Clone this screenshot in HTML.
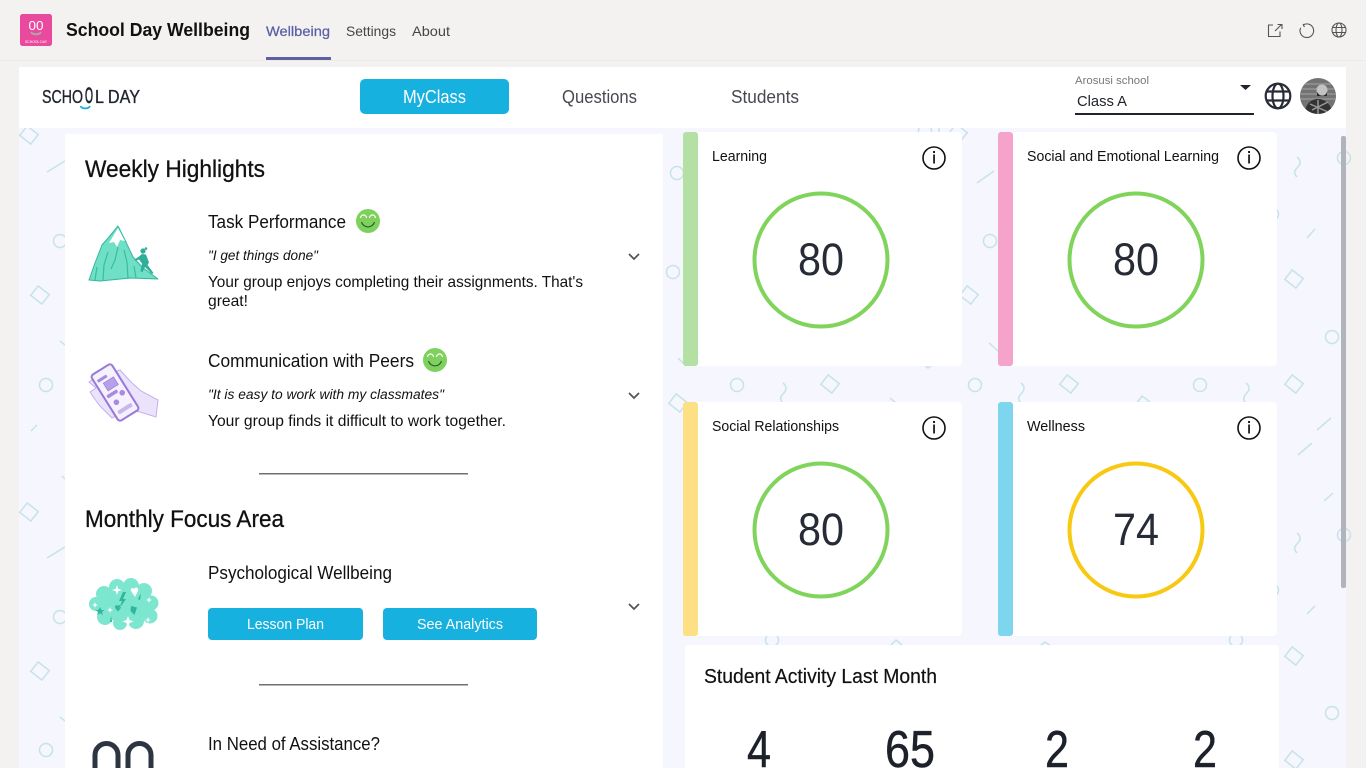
<!DOCTYPE html>
<html><head><meta charset="utf-8"><title>School Day Wellbeing</title>
<style>
html,body{margin:0;padding:0;width:1366px;height:768px;overflow:hidden;background:#f3f2f1}
svg{display:block;position:absolute;left:0;top:0}
text{font-family:"Liberation Sans",sans-serif}
.p{fill:none;stroke:#c8e2ea;stroke-width:1.500}
</style></head><body>
<svg width="1366" height="768" viewBox="0 0 1366 768" xmlns="http://www.w3.org/2000/svg">
<defs>
<g id="dia"><rect x="-7" y="-6" width="14" height="12" transform="rotate(38)" class="p"/></g>
<g id="cir"><circle r="6.500" class="p"/></g>
<g id="s"><path class="p" d="M-1 -10c5 4 3 8 0 11c-3 3 -3 6 0 9"/></g>
<g id="info"><circle r="11" fill="#fff" stroke="#111" stroke-width="1.600"/><rect x="-.8" y="-3.500" width="1.700" height="9" fill="#111"/><rect x="-.9" y="-7" width="1.900" height="2" fill="#111"/></g>
<g id="smile"><circle r="12" fill="#7fd15d"/><path d="M-7.500 -3a3 3 0 0 1 6 0M1.500 -3a3 3 0 0 1 6 0" fill="none" stroke="#fff" stroke-width="1.200"/><path d="M-6.500 1a6.800 7 0 0 0 13 0" fill="none" stroke="#2b5a38" stroke-width="1.200"/></g>
<g id="chev"><path d="M-5 -3L0 2L5 -3" fill="none" stroke="#555" stroke-width="1.800"/></g>
</defs>

<rect width="1366" height="768" fill="#f3f2f1"/>
<rect x="0" y="60" width="1366" height="1" fill="#ecebea"/>
<rect x="19" y="128" width="1327" height="640" fill="#f5f6fe"/>

<!-- background pattern -->
<use href="#dia" x="29" y="135"/><path class="p" d="M47 172L65 161"/><use href="#cir" x="60" y="241"/>
<use href="#dia" x="40" y="295"/><path class="p" d="M60 341L65 345"/><use href="#cir" x="46" y="385"/>
<path class="p" d="M31 431L37 425"/><path class="p" d="M62 476L65 479"/><use href="#dia" x="29" y="512"/>
<path class="p" d="M47 558L65 547"/><use href="#cir" x="60" y="617"/><use href="#dia" x="40" y="671"/>
<path class="p" d="M60 717L65 721"/><use href="#cir" x="46" y="750"/>
<use href="#cir" x="673" y="272"/><use href="#cir" x="677" y="173"/><path class="p" d="M678 358L686 366"/>
<use href="#dia" x="969" y="295"/><path class="p" d="M977 183L994 171"/><use href="#cir" x="990" y="241"/><path class="p" d="M989 343L998 351"/>
<use href="#cir" x="737" y="385"/><use href="#s" x="784" y="393"/><use href="#dia" x="830" y="384"/><use href="#dia" x="678" y="403"/>
<path class="p" d="M890 398L896 403M921 362L928 368L936 362"/>
<use href="#cir" x="975" y="385"/><use href="#s" x="1022" y="393"/><use href="#dia" x="1069" y="384"/><path class="p" d="M1136 404L1142 396L1150 402"/>
<use href="#cir" x="1200" y="385"/><use href="#s" x="1247" y="393"/><use href="#dia" x="1294" y="384"/>
<use href="#s" x="1298" y="167"/><path class="p" d="M1307 238L1315 229"/>
<use href="#dia" x="1294" y="279"/><use href="#cir" x="1332" y="337"/>
<path class="p" d="M1317 430L1331 418"/><path class="p" d="M1298 455L1312 443"/><path class="p" d="M1324 501L1333 493"/>
<use href="#s" x="1298" y="543"/><path class="p" d="M1307 614L1315 606"/>
<use href="#dia" x="1294" y="656"/><use href="#cir" x="1332" y="713"/><use href="#dia" x="1294" y="760"/>
<use href="#cir" x="1344" y="158"/><use href="#cir" x="1344" y="535"/><use href="#cir" x="1272" y="214"/><use href="#cir" x="1272" y="590"/>
<use href="#cir" x="925" y="131"/><use href="#dia" x="958" y="133"/><path class="p" d="M939 128v5"/>
<use href="#cir" x="772" y="640"/><use href="#cir" x="1236" y="640"/>
<path class="p" d="M891 645L896 640L902 645M1040 646L1045 642L1051 646"/>

<rect x="1341" y="136" width="5" height="452" rx="2" fill="#b2b4bd"/>

<!-- top bar -->
<rect x="20" y="14" width="32" height="32" rx="2.500" fill="#ea4a9d"/>
<text x="36" y="30" font-size="13" fill="#fff" text-anchor="middle" textLength="15" lengthAdjust="spacingAndGlyphs">00</text>
<path d="M31 32a5.500 4 0 0 0 10 0" fill="none" stroke="#aaa" stroke-width="1.800"/>
<text x="36" y="43" font-size="3.500" fill="#fff" text-anchor="middle" textLength="22" lengthAdjust="spacingAndGlyphs">SCHOOL DAY</text>
<text x="66" y="36" font-size="18" font-weight="700" fill="#111" textLength="184" lengthAdjust="spacingAndGlyphs">School Day Wellbeing</text>
<text x="266" y="36" font-size="14" fill="#5b5ea6" stroke="#5b5ea6" stroke-width=".25" textLength="64" lengthAdjust="spacingAndGlyphs">Wellbeing</text>
<rect x="266" y="57" width="65" height="3" fill="#5f60a4"/>
<text x="346" y="36" font-size="14" fill="#484644" textLength="50" lengthAdjust="spacingAndGlyphs">Settings</text>
<text x="412" y="36" font-size="14" fill="#484644" textLength="38" lengthAdjust="spacingAndGlyphs">About</text>
<g fill="none" stroke="#555" stroke-width="1.100">
<path d="M1273 25h-4.500v11.500h11.500v-5M1275 31l6.500 -6.500M1277.500 24.500h4.500v4.500"/>
<path d="M1303.500 24.800a6.800 6.800 0 1 1 -2.800 3M1303 24.500l1.500 2.500M1303 24.500l3 -.5"/>
<circle cx="1339" cy="30" r="7"/><ellipse cx="1339" cy="30" rx="3" ry="7"/><path d="M1332.500 27.500h13M1332.500 32.500h13"/>
</g>

<!-- app header -->
<rect x="19" y="67" width="1327" height="61" fill="#fff"/>
<text x="42" y="103" font-size="18" fill="#20242c" stroke="#20242c" stroke-width=".3" textLength="41" lengthAdjust="spacingAndGlyphs">SCHO</text>
<text x="85" y="103" font-size="22" fill="#20242c" stroke="#20242c" stroke-width=".8" textLength="8" lengthAdjust="spacingAndGlyphs">O</text>
<text x="95" y="103" font-size="18" fill="#20242c" stroke="#20242c" stroke-width=".3" textLength="45" lengthAdjust="spacingAndGlyphs">L DAY</text>
<path d="M80.500 106a5 3.500 0 0 0 9.500 0" fill="none" stroke="#17b1e0" stroke-width="1.800"/>
<rect x="360" y="79" width="149" height="35" rx="5" fill="#17b1e0"/>
<text x="403" y="103" font-size="18" fill="#fff" textLength="63" lengthAdjust="spacingAndGlyphs">MyClass</text>
<text x="562" y="103" font-size="18" fill="#464a50" textLength="75" lengthAdjust="spacingAndGlyphs">Questions</text>
<text x="731" y="103" font-size="18" fill="#464a50" textLength="68" lengthAdjust="spacingAndGlyphs">Students</text>
<text x="1075" y="84" font-size="11" fill="#777" textLength="74" lengthAdjust="spacingAndGlyphs">Arosusi school</text>
<text x="1077" y="106" font-size="15" fill="#20242c" textLength="50" lengthAdjust="spacingAndGlyphs">Class A</text>
<rect x="1075" y="113" width="179" height="2" fill="#20242c"/>
<path d="M1240 85h11l-5.500 5z" fill="#20242c"/>
<g fill="none" stroke="#262b36" stroke-width="2.200">
<circle cx="1278" cy="96" r="12.300"/><ellipse cx="1278" cy="96" rx="5.500" ry="12.300"/><path d="M1267 91.500h22M1267 100.500h22"/>
</g>
<clipPath id="av"><circle cx="1318" cy="96" r="18"/></clipPath>
<g clip-path="url(#av)">
<rect x="1300" y="78" width="36" height="36" fill="#737373"/>
<path d="M1300 84h36M1300 89h36M1300 94h36M1300 99h36" stroke="#959595" stroke-width="1.500"/>
<circle cx="1322" cy="90" r="5.500" fill="#c2c2c2"/><path d="M1317 92c3 5 8 5 10 0v4h-10z" fill="#2a2a2a"/>
<path d="M1305 114c0 -10 6 -15 13 -15c8 0 13 6 15 15z" fill="#333"/>
<path d="M1310 104l18 8M1312 110l16 -8M1318 100v14" stroke="#999" stroke-width="1.500"/>
</g>

<!-- left card -->
<rect x="65" y="134" width="598" height="634" fill="#fff"/>
<text x="85" y="177" font-size="24" fill="#111" stroke="#111" stroke-width=".3" textLength="180" lengthAdjust="spacingAndGlyphs">Weekly Highlights</text>

<!-- mountain -->
<path d="M89 280L95 263L102 245L109 237L118 226L125 240L133 257L142 267L158 279L130 278L100 281Z" fill="#6fe0c5" stroke="#2fb79d" stroke-width="1" stroke-linejoin="round"/>
<path d="M109 243L118 228L125 241L120 240L117 247L114 242Z" fill="#fff"/>
<path d="M118 247l-3 13l-4 9M108 252l-4 13l-1 15M124 250l3 12l1 17M97 267l-2 13M134 266l2 12" fill="none" stroke="#37bda2" stroke-width="1.200"/>
<circle cx="143" cy="251" r="2.600" fill="#2fae9a"/><circle cx="146" cy="248.500" r="1.300" fill="#2fae9a"/>
<path d="M142 254l4 .5l3 8l-1.500 2.500l6 8l-1.500 1l-7 -7l-2.500 5l-2 -.5l1.500 -8l-3 -4l-4 1.500l-.5 -1.500l4.500 -3z" fill="#2fae9a"/>

<text x="208" y="228" font-size="18" fill="#111" textLength="138" lengthAdjust="spacingAndGlyphs">Task Performance</text>
<use href="#smile" x="368" y="221"/>
<text x="208" y="260" font-size="13.500" font-style="italic" fill="#111" textLength="110" lengthAdjust="spacingAndGlyphs">"I get things done"</text>
<text x="208" y="287" font-size="16" fill="#111" textLength="375" lengthAdjust="spacingAndGlyphs">Your group enjoys completing their assignments. That's</text>
<text x="208" y="306" font-size="16" fill="#111" textLength="40" lengthAdjust="spacingAndGlyphs">great!</text>
<use href="#chev" x="634" y="257"/>

<!-- phone in hand -->
<path d="M120 370L132 383L141 391L158 400L156 417L140 412L128 410L112 418L100 406L94 398L90 392L96 388L89 382L95 378Z" fill="#ebe3fb" stroke="#c3b0ec" stroke-width="1"/>
<g transform="translate(115 392.500) rotate(-32)">
<rect x="-12" y="-27" width="24" height="54" rx="3" fill="#f5f1fe" stroke="#9878d8" stroke-width="2"/>
<rect x="-9" y="-20" width="11" height="3" rx="1" fill="#a88ae0"/>
<rect x="-5" y="-14" width="12" height="9" fill="#b7a0ea" stroke="#9878d8" stroke-width=".7"/>
<rect x="-9" y="-2" width="12" height="3.500" rx="1" fill="#a88ae0"/>
<circle cx="6" cy="4" r="2.800" fill="#a88ae0"/><circle cx="-4" cy="9" r="2.800" fill="#a88ae0"/>
<rect x="-8" y="17" width="16" height="4" rx="1" fill="#c8b6ee"/>
</g>

<text x="208" y="367" font-size="18" fill="#111" textLength="206" lengthAdjust="spacingAndGlyphs">Communication with Peers</text>
<use href="#smile" x="435" y="360"/>
<text x="208" y="399" font-size="13.500" font-style="italic" fill="#111" textLength="236" lengthAdjust="spacingAndGlyphs">"It is easy to work with my classmates"</text>
<text x="208" y="426" font-size="16" fill="#111" textLength="298" lengthAdjust="spacingAndGlyphs">Your group finds it difficult to work together.</text>
<use href="#chev" x="634" y="396"/>
<rect x="259" y="473" width="209" height="1.500" fill="#707070"/>

<text x="85" y="527" font-size="24" fill="#111" stroke="#111" stroke-width=".3" textLength="199" lengthAdjust="spacingAndGlyphs">Monthly Focus Area</text>
<!-- cloud -->
<g fill="#7de6cf"><circle cx="96" cy="604" r="7"/><circle cx="104" cy="594" r="8"/><circle cx="117" cy="587" r="8"/><circle cx="131" cy="586" r="8"/><circle cx="144" cy="591" r="8"/><circle cx="151" cy="603" r="7.500"/><circle cx="150" cy="616" r="7.500"/><circle cx="136" cy="621" r="8"/><circle cx="120" cy="623" r="7"/><circle cx="105" cy="617" r="8"/><rect x="100" y="590" width="48" height="30" rx="10"/></g>
<g fill="#fff"><path d="M117 585l1.200 3.800l3.800 1.200l-3.800 1.200l-1.200 3.800l-1.200 -3.800l-3.800 -1.200l3.800 -1.200zM128 616l1.500 4l4 1.500l-4 1.500l-1.500 4l-1.500 -4l-4 -1.500l4 -1.500zM95 602l.8 2.200l2.200 .8l-2.200 .8l-.8 2.200l-.8 -2.200l-2.200 -.8l2.200 -.8zM110 607l.8 2.200l2.200 .8l-2.200 .8l-.8 2.200l-.8 -2.200l-2.200 -.8l2.200 -.8zM149 597l.8 2.200l2.200 .8l-2.200 .8l-.8 2.200l-.8 -2.200l-2.200 -.8l2.200 -.8zM148 617l.8 2.200l2.200 .8l-2.200 .8l-.8 2.200l-.8 -2.200l-2.200 -.8l2.200 -.8z"/><path d="M134 589c2 -3 5 -1 4 2l-3 6l-4 -6c-1 -3 2 -4 3 -2z"/></g>
<g fill="#2fb79d"><path d="M100 607l1.500 3h3l-2.500 2l1 3l-3 -1.800l-3 1.800l1 -3l-2.500 -2h3z"/><path d="M123 592l-4 9h3l-3 8l7 -10h-3l3 -7zM118 606c1.500 -2 4 0 2.500 2.500l-2.500 3l-2.500 -3c-1.500 -2.500 1 -4.500 2.500 -2.500zM131 606l6 1.500l-2.500 7.500l-4 -4zM141 593l-3 6l2 1zM111 616l-1 6h2z"/></g>

<text x="208" y="579" font-size="18" fill="#111" textLength="184" lengthAdjust="spacingAndGlyphs">Psychological Wellbeing</text>
<rect x="208" y="608" width="155" height="32" rx="4" fill="#17b1e0"/>
<text x="247" y="629" font-size="15" fill="#fff" textLength="77" lengthAdjust="spacingAndGlyphs">Lesson Plan</text>
<rect x="383" y="608" width="154" height="32" rx="4" fill="#17b1e0"/>
<text x="417" y="629" font-size="15" fill="#fff" textLength="86" lengthAdjust="spacingAndGlyphs">See Analytics</text>
<use href="#chev" x="634" y="607"/>
<rect x="259" y="684" width="209" height="1.500" fill="#707070"/>
<path d="M95 770V755a11.500 11.500 0 0 1 23 0V770M128 770V755a11.500 11.500 0 0 1 23 0V770" fill="none" stroke="#2e3542" stroke-width="5"/>
<text x="208" y="750" font-size="18" fill="#111" textLength="172" lengthAdjust="spacingAndGlyphs">In Need of Assistance?</text>

<!-- score cards -->
<rect x="683" y="132" width="279" height="234" rx="4" fill="#fff"/><rect x="683" y="132" width="15" height="234" rx="3" fill="#b5e0a3"/>
<text x="712" y="161" font-size="14.500" fill="#111" textLength="55" lengthAdjust="spacingAndGlyphs">Learning</text>
<use href="#info" x="934" y="158"/>
<circle cx="821" cy="260" r="66.500" fill="none" stroke="#80d45c" stroke-width="4"/>
<text x="798" y="275" font-size="45" fill="#262b36" textLength="46" lengthAdjust="spacingAndGlyphs">80</text>

<rect x="998" y="132" width="279" height="234" rx="4" fill="#fff"/><rect x="998" y="132" width="15" height="234" rx="3" fill="#f6a3cc"/>
<text x="1027" y="161" font-size="14.500" fill="#111" textLength="192" lengthAdjust="spacingAndGlyphs">Social and Emotional Learning</text>
<use href="#info" x="1249" y="158"/>
<circle cx="1136" cy="260" r="66.500" fill="none" stroke="#80d45c" stroke-width="4"/>
<text x="1113" y="275" font-size="45" fill="#262b36" textLength="46" lengthAdjust="spacingAndGlyphs">80</text>

<rect x="683" y="402" width="279" height="234" rx="4" fill="#fff"/><rect x="683" y="402" width="15" height="234" rx="3" fill="#fde083"/>
<text x="712" y="431" font-size="14.500" fill="#111" textLength="127" lengthAdjust="spacingAndGlyphs">Social Relationships</text>
<use href="#info" x="934" y="428"/>
<circle cx="821" cy="530" r="66.500" fill="none" stroke="#80d45c" stroke-width="4"/>
<text x="798" y="545" font-size="45" fill="#262b36" textLength="46" lengthAdjust="spacingAndGlyphs">80</text>

<rect x="998" y="402" width="279" height="234" rx="4" fill="#fff"/><rect x="998" y="402" width="15" height="234" rx="3" fill="#7dd6ee"/>
<text x="1027" y="431" font-size="14.500" fill="#111" textLength="58" lengthAdjust="spacingAndGlyphs">Wellness</text>
<use href="#info" x="1249" y="428"/>
<circle cx="1136" cy="530" r="66.500" fill="none" stroke="#f8c913" stroke-width="4"/>
<text x="1113" y="545" font-size="45" fill="#262b36" textLength="46" lengthAdjust="spacingAndGlyphs">74</text>

<!-- activity -->
<rect x="685" y="645" width="594" height="130" rx="4" fill="#fff"/>
<text x="704" y="683" font-size="20" fill="#111" stroke="#111" stroke-width=".2" textLength="233" lengthAdjust="spacingAndGlyphs">Student Activity Last Month</text>
<text x="747" y="767" font-size="52" fill="#1d2129" stroke="#1d2129" stroke-width=".5" textLength="24" lengthAdjust="spacingAndGlyphs">4</text>
<text x="885" y="767" font-size="52" fill="#1d2129" stroke="#1d2129" stroke-width=".5" textLength="50" lengthAdjust="spacingAndGlyphs">65</text>
<text x="1045" y="767" font-size="52" fill="#1d2129" stroke="#1d2129" stroke-width=".5" textLength="24" lengthAdjust="spacingAndGlyphs">2</text>
<text x="1193" y="767" font-size="52" fill="#1d2129" stroke="#1d2129" stroke-width=".5" textLength="24" lengthAdjust="spacingAndGlyphs">2</text>
</svg>
</body></html>
